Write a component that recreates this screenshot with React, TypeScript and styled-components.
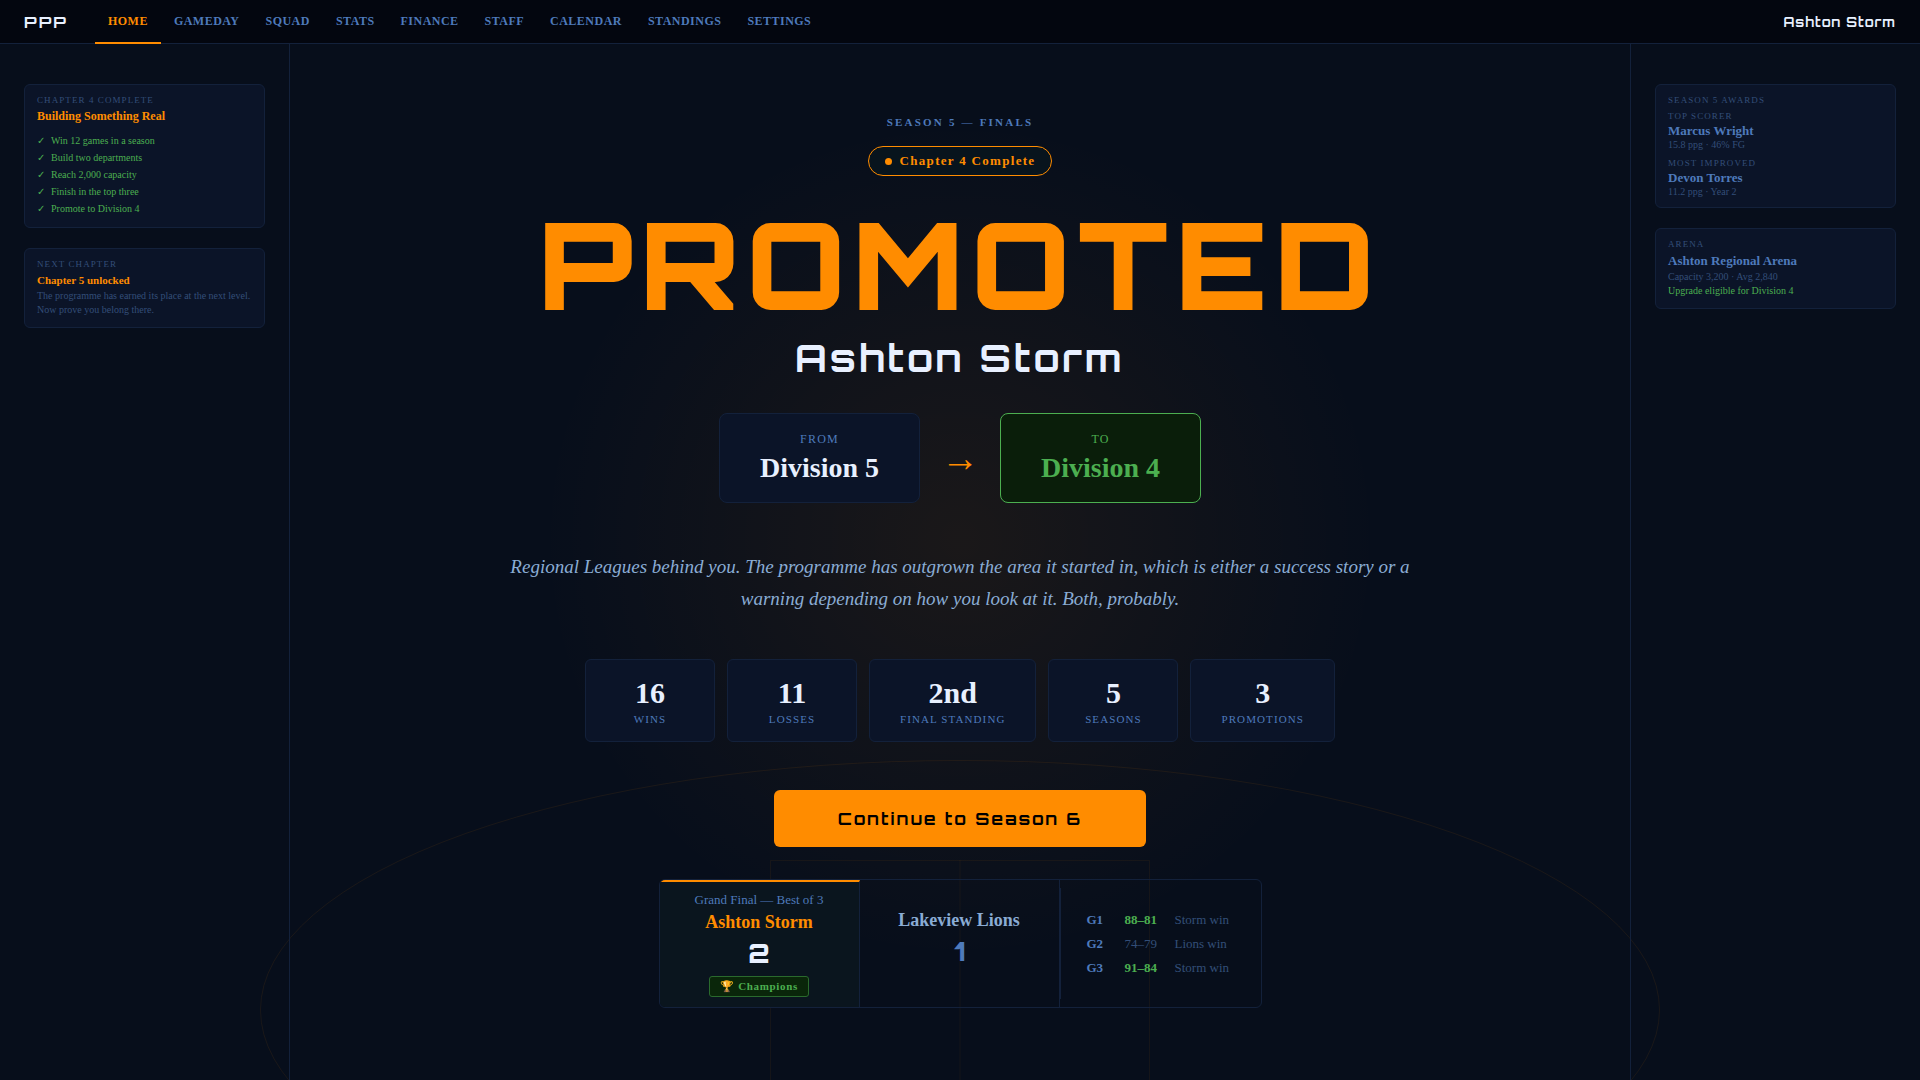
import React from "react";
import styled, { createGlobalStyle, css } from "styled-components";

const serif = `"Liberation Serif", "Times New Roman", serif`;
const display = `Orbitron, "DejaVu Sans", sans-serif`;

const color = {
  page: "#070e1b",
  panel: "#0b1428",
  line: "#13213b",
  orange: "#ff8c00",
  white: "#e8f0ff",
  blue: "#4e7abb",
  soft: "#8aacd4",
  dim: "#334e78",
  green: "#4caf50",
};

const GlobalStyle = createGlobalStyle`
  *, *::before, *::after { box-sizing: border-box; }
  body { margin: 0; background: ${color.page}; color: ${color.white}; font-family: ${serif}; }
  h1, h2, h3, p, ul, dl, dd, dt { margin: 0; padding: 0; }
  ul { list-style: none; }
`;

const Page = styled.div`
  position: relative;
  min-height: 100vh;
  display: flex;
  flex-direction: column;
  overflow: hidden;
`;

const Backdrop = styled.div`
  position: absolute;
  inset: 0;
  overflow: hidden;
  pointer-events: none;
`;

const Glow = styled.div`
  position: absolute;
  inset: 0;
  background: radial-gradient(circle 420px at 50% 50%, rgba(255, 140, 0, 0.08), transparent);
`;

const Court = styled.svg`
  position: absolute;
  left: 50%;
  bottom: 0;
  transform: translateX(-50%);
`;

const Nav = styled.nav`
  position: relative;
  height: 44px;
  padding: 0 24px;
  display: flex;
  align-items: stretch;
  background: #03060f;
  border-bottom: 1px solid ${color.line};
`;

const Logo = styled.a`
  align-self: center;
  margin-right: 27px;
  color: ${color.white};
  font: 700 16px/20px ${display};
  letter-spacing: 2px;
  text-decoration: none;
`;

const NavLink = styled.a<{ $active?: boolean }>`
  display: flex;
  align-items: center;
  padding: 0 13px;
  color: ${color.blue};
  font-size: 12px;
  font-weight: 700;
  line-height: 13px;
  letter-spacing: 0.04em;
  text-decoration: none;
  ${(p) => p.$active && css`
    color: ${color.orange};
    border-bottom: 2px solid ${color.orange};
    margin-bottom: -1px;
  `}
`;

const NavTeam = styled.span`
  align-self: center;
  margin-left: auto;
  font: 700 13px/20px ${display};
  letter-spacing: 1px;
`;

const Columns = styled.div`
  position: relative;
  flex: 1;
  display: grid;
  grid-template-columns: 290px 1fr 290px;
`;

const Aside = styled.aside<{ $side: "left" | "right" }>`
  display: flex;
  flex-direction: column;
  gap: 20px;
  padding: 40px 24px;
  ${(p) => (p.$side === "left" ? "border-right" : "border-left")}: 1px solid ${color.line};
`;

const Card = styled.section`
  padding: 10px 12px;
  background: ${color.panel};
  border: 1px solid ${color.line};
  border-radius: 6px;
`;

const CardLabel = styled.p`
  color: ${color.dim};
  font-size: 9px;
  line-height: 10px;
  letter-spacing: 0.12em;
  text-transform: uppercase;
`;

const CardTitle = styled.h3<{ $small?: boolean }>`
  margin: 3px 0 1px;
  color: ${color.orange};
  font-size: ${(p) => (p.$small ? 11 : 12)}px;
  line-height: 16px;
`;

const Goals = styled.ul`
  margin-top: 8px;
`;

const Goal = styled.li`
  display: flex;
  gap: 6px;
  color: ${color.green};
  font-size: 10px;
  line-height: 17px;
`;

const Detail = styled.p<{ $good?: boolean }>`
  color: ${(p) => (p.$good ? color.green : color.dim)};
  font-size: 10px;
  line-height: 14px;
`;

const Award = styled.div`
  margin-top: 6px;
  & + & { margin-top: 8px; }
`;

const AwardName = styled.h3`
  margin-top: 2px;
  color: ${color.blue};
  font-size: 13px;
  line-height: 16px;
`;

const ArenaName = styled(AwardName)`
  margin: 4px 0 1px;
`;

const Note = styled.p`
  color: ${color.dim};
  font-size: 10px;
  line-height: 11px;
`;

const Main = styled.main`
  display: flex;
  flex-direction: column;
  align-items: center;
  justify-content: center;
  text-align: center;
`;

const Eyebrow = styled.p`
  color: ${color.blue};
  font-size: 11px;
  font-weight: 700;
  line-height: 12px;
  letter-spacing: 0.2em;
`;

const Pill = styled.div`
  display: flex;
  align-items: center;
  gap: 8px;
  height: 30px;
  margin-top: 18px;
  padding: 0 16px;
  background: #08141d;
  border: 1px solid ${color.orange};
  border-radius: 20px;
  color: ${color.orange};
  font-size: 13px;
  font-weight: 700;
  letter-spacing: 0.1em;
`;

const Dot = styled.span`
  width: 7px;
  height: 7px;
  border-radius: 50%;
  background: ${color.orange};
`;

const Title = styled.h1`
  margin-top: 28px;
  color: ${color.orange};
  font: 900 120px/120px ${display};
  letter-spacing: 7px;
`;

const TeamName = styled.h2`
  margin-top: 8px;
  font: 700 38px/51px ${display};
  letter-spacing: 3px;
`;

const Move = styled.div`
  display: flex;
  align-items: center;
  gap: 21px;
  margin-top: 30px;
`;

const Division = styled.div<{ $up?: boolean }>`
  min-width: 200px;
  height: 90px;
  padding: 18px 40px 0;
  border-radius: 8px;
  border: 1px solid ${(p) => (p.$up ? color.green : color.line)};
  background: ${(p) => (p.$up ? "#0a1e0a" : color.panel)};
  color: ${(p) => (p.$up ? color.green : color.white)};
`;

const DivisionLabel = styled.p<{ $up?: boolean }>`
  color: ${(p) => (p.$up ? color.green : color.blue)};
  font-size: 12px;
  line-height: 14px;
  letter-spacing: 0.1em;
`;

const DivisionName = styled.p`
  margin-top: 6px;
  font-size: 28px;
  font-weight: 700;
  line-height: 32px;
`;

const Arrow = styled.span`
  width: 38px;
  color: ${color.orange};
  font-size: 38px;
  line-height: 36px;
`;

const Quote = styled.p`
  max-width: 910px;
  margin-top: 48px;
  color: ${color.soft};
  font-size: 19px;
  font-style: italic;
  line-height: 32px;
`;

const Stats = styled.dl`
  display: flex;
  gap: 12px;
  margin-top: 44px;
`;

const Stat = styled.div`
  display: flex;
  flex-direction: column-reverse;
  min-width: 130px;
  padding: 17px 30px 15px;
  background: ${color.panel};
  border: 1px solid ${color.line};
  border-radius: 6px;
`;

const StatLabel = styled.dt`
  color: ${color.blue};
  font-size: 11px;
  line-height: 13px;
  letter-spacing: 0.1em;
`;

const StatValue = styled.dd`
  margin-bottom: 4px;
  font-size: 30px;
  font-weight: 700;
  line-height: 32px;
`;

const Continue = styled.button`
  height: 57px;
  margin-top: 48px;
  padding: 0 64px;
  border: 0;
  border-radius: 6px;
  background: ${color.orange};
  color: #000;
  font: 700 17px/24px ${display};
  letter-spacing: 2px;
  cursor: pointer;
`;

const Series = styled.section`
  display: grid;
  grid-template-columns: 200px 200px 201px;
  height: 129px;
  margin-top: 32px;
  border: 1px solid ${color.line};
  border-radius: 6px;
  overflow: hidden;
`;

const Side = styled.div<{ $winner?: boolean }>`
  display: flex;
  flex-direction: column;
  align-items: center;
  justify-content: center;
  border-right: 1px solid ${color.line};
  ${(p) => p.$winner ? css`
    background: #0a151e;
    border-top: 2px solid ${color.orange};
  ` : css`
    padding-bottom: 14px;
  `}
`;

const SeriesNote = styled.p`
  color: ${color.blue};
  font-size: 13px;
  line-height: 16px;
`;

const SideName = styled.h3<{ $winner?: boolean }>`
  margin-top: 4px;
  color: ${(p) => (p.$winner ? color.orange : color.soft)};
  font-size: 18px;
  line-height: 20px;
`;

const Score = styled.p<{ $winner?: boolean }>`
  margin-top: 4px;
  color: ${(p) => (p.$winner ? color.white : color.blue)};
  font: 900 26px/34px ${display};
`;

const Champions = styled.p`
  height: 21px;
  margin-top: 6px;
  padding: 0 10px;
  background: #0a260a;
  border: 1px solid #2a6a2d;
  border-radius: 3px;
  color: ${color.green};
  font-size: 11px;
  font-weight: 700;
  line-height: 19px;
  letter-spacing: 0.06em;
`;

const GamesPane = styled.div`
  display: flex;
  align-items: center;
  margin: 8px 0;
  padding-left: 26px;
  border-left: 1px solid ${color.line};
`;

const Games = styled.table`
  border-collapse: collapse;
  color: ${color.dim};
  font-size: 13px;
  line-height: 24px;
  text-align: left;
  th, td { padding: 0; font-weight: 400; }
`;

const GameName = styled.th`
  && { width: 38px; color: ${color.blue}; font-weight: 700; }
`;

const GameScore = styled.td<{ $won: boolean }>`
  && {
    width: 50px;
    ${(p) => p.$won && css`color: ${color.green}; font-weight: 700;`}
  }
`;

const links = ["HOME", "GAMEDAY", "SQUAD", "STATS", "FINANCE", "STAFF", "CALENDAR", "STANDINGS", "SETTINGS"];
const goals = ["Win 12 games in a season", "Build two departments", "Reach 2,000 capacity", "Finish in the top three", "Promote to Division 4"];
const awards = [
  { label: "Top Scorer", name: "Marcus Wright", note: "15.8 ppg · 46% FG" },
  { label: "Most Improved", name: "Devon Torres", note: "11.2 ppg · Year 2" },
];
const stats = [["16", "WINS"], ["11", "LOSSES"], ["2nd", "FINAL STANDING"], ["5", "SEASONS"], ["3", "PROMOTIONS"]];
const games = [
  { name: "G1", score: "88–81", result: "Storm win", won: true },
  { name: "G2", score: "74–79", result: "Lions win", won: false },
  { name: "G3", score: "91–84", result: "Storm win", won: true },
];

export default function App() {
  return (
    <Page>
      <GlobalStyle />
      <Backdrop aria-hidden="true">
        <Glow />
        <Court width="1400" height="320" viewBox="0 0 1400 320" fill="none" stroke={color.orange}>
          <ellipse cx="700" cy="250" rx="699.5" ry="249.5" strokeOpacity="0.08" />
          <path d="M510.5 320V100.5H889.5V320" strokeOpacity="0.06" />
          <path d="M700 100V320" strokeOpacity="0.06" />
        </Court>
      </Backdrop>
      <Nav>
        <Logo href="#">PPP</Logo>
        {links.map((link, i) => (
          <NavLink key={link} href="#" $active={i === 0}>{link}</NavLink>
        ))}
        <NavTeam>Ashton Storm</NavTeam>
      </Nav>
      <Columns>
        <Aside $side="left">
          <Card>
            <CardLabel>Chapter 4 Complete</CardLabel>
            <CardTitle>Building Something Real</CardTitle>
            <Goals>
              {goals.map((goal) => (
                <Goal key={goal}><span>✓</span>{goal}</Goal>
              ))}
            </Goals>
          </Card>
          <Card>
            <CardLabel>Next Chapter</CardLabel>
            <CardTitle $small>Chapter 5 unlocked</CardTitle>
            <Detail>The programme has earned its place at the next level. Now prove you belong there.</Detail>
          </Card>
        </Aside>
        <Main>
          <Eyebrow>SEASON 5 — FINALS</Eyebrow>
          <Pill><Dot />Chapter 4 Complete</Pill>
          <Title>PROMOTED</Title>
          <TeamName>Ashton Storm</TeamName>
          <Move>
            <Division>
              <DivisionLabel>FROM</DivisionLabel>
              <DivisionName>Division 5</DivisionName>
            </Division>
            <Arrow>→</Arrow>
            <Division $up>
              <DivisionLabel $up>TO</DivisionLabel>
              <DivisionName>Division 4</DivisionName>
            </Division>
          </Move>
          <Quote>
            Regional Leagues behind you. The programme has outgrown the area it started in, which is either a
            success story or a warning depending on how you look at it. Both, probably.
          </Quote>
          <Stats>
            {stats.map(([value, label]) => (
              <Stat key={label}>
                <StatLabel>{label}</StatLabel>
                <StatValue>{value}</StatValue>
              </Stat>
            ))}
          </Stats>
          <Continue type="button">Continue to Season 6</Continue>
          <Series>
            <Side $winner>
              <SeriesNote>Grand Final — Best of 3</SeriesNote>
              <SideName $winner>Ashton Storm</SideName>
              <Score $winner>2</Score>
              <Champions>🏆 Champions</Champions>
            </Side>
            <Side>
              <SideName>Lakeview Lions</SideName>
              <Score>1</Score>
            </Side>
            <GamesPane>
              <Games>
                <tbody>
                  {games.map((game) => (
                    <tr key={game.name}>
                      <GameName scope="row">{game.name}</GameName>
                      <GameScore $won={game.won}>{game.score}</GameScore>
                      <td>{game.result}</td>
                    </tr>
                  ))}
                </tbody>
              </Games>
            </GamesPane>
          </Series>
        </Main>
        <Aside $side="right">
          <Card>
            <CardLabel>Season 5 Awards</CardLabel>
            {awards.map((award) => (
              <Award key={award.name}>
                <CardLabel>{award.label}</CardLabel>
                <AwardName>{award.name}</AwardName>
                <Note>{award.note}</Note>
              </Award>
            ))}
          </Card>
          <Card>
            <CardLabel>Arena</CardLabel>
            <ArenaName>Ashton Regional Arena</ArenaName>
            <Detail>Capacity 3,200 · Avg 2,840</Detail>
            <Detail $good>Upgrade eligible for Division 4</Detail>
          </Card>
        </Aside>
      </Columns>
    </Page>
  );
}
